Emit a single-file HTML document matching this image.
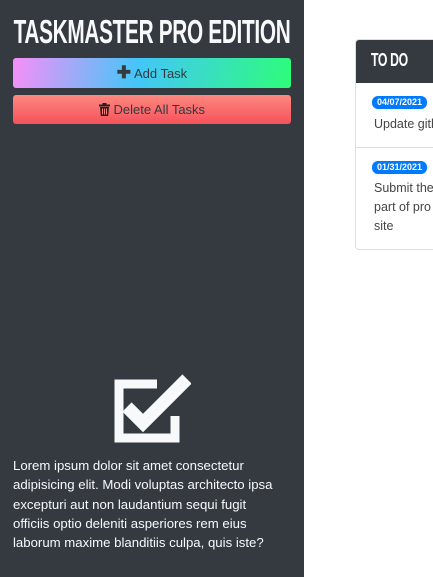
<!DOCTYPE html>
<html><head><style>
*{margin:0;padding:0;box-sizing:border-box}
body{width:433px;height:577px;overflow:hidden;background:#fff;font-family:"Liberation Sans",sans-serif;position:relative}
.side{position:absolute;left:0;top:0;width:304px;height:577px;background:#343a40}
h1{position:absolute;left:152px;top:14px;color:#f8f9fa;font-size:33px;font-weight:bold;letter-spacing:-0.5px;white-space:nowrap;transform:translateX(-50%) scaleX(0.63);line-height:36px}
.btn{position:absolute;left:13px;width:278px;border-radius:3px;text-align:center;color:#343a40;font-size:13px;line-height:29px}
.add{top:58px;height:30px;background:linear-gradient(100deg,#f78ff7 0%,#43c6f9 45%,#2dfd7a 100%)}
.del{top:95px;height:29px;background:linear-gradient(#fd8880,#f5525b)}
.lorem{position:absolute;left:13px;top:456px;width:272px;color:#f8f9fa;font-size:13.2px;line-height:19.3px}
.card{position:absolute;left:355px;top:39px;width:100px;height:211px;border:1px solid #ddd;border-radius:4px;overflow:hidden}
.ch{background:#343a40;height:43px;color:#fff;font-weight:bold;font-size:18px;padding:10px 0 0 15px;letter-spacing:-0.5px}
.ch span{display:inline-block;transform:scaleX(0.68);transform-origin:left}
.badge{position:absolute;left:16px;background:#007bff;color:#fff;font-size:9px;font-weight:bold;border-radius:6px;padding:1px 5px;line-height:11px}
.t{position:absolute;left:18px;font-size:12.5px;color:#444;line-height:19px;white-space:nowrap}
</style></head><body>
<div class="side">
<h1>TASKMASTER PRO EDITION</h1>
<div class="btn add"><b style="font-size:17px">✚</b> Add Task</div>
<div class="btn del"><svg width="11" height="13" viewBox="0 0 11 13" style="vertical-align:-2px"><rect x="0" y="1.5" width="11" height="2" fill="#222"/><rect x="3.5" y="0" width="4" height="2" fill="#222"/><path d="M1 4h9l-.8 9H1.8z" fill="#222"/><path d="M3.5 5.5v6M5.5 5.5v6M7.5 5.5v6" stroke="#f77" stroke-width="1"/></svg> Delete All Tasks</div>
<svg style="position:absolute;left:113px;top:374px" width="78" height="70" viewBox="0 0 78 70"><path d="M44 10H6v54h56V42" fill="none" stroke="#f8f9fa" stroke-width="9"/><path d="M14 33l16 16L74 5" fill="none" stroke="#f8f9fa" stroke-width="13"/></svg>
<div class="lorem">Lorem ipsum dolor sit amet consectetur adipisicing elit. Modi voluptas architecto ipsa excepturi aut non laudantium sequi fugit officiis optio deleniti asperiores rem eius laborum maxime blanditiis culpa, quis iste?</div>
</div>
<div class="card">
<div class="ch"><span>TO DO</span></div>
<div class="badge" style="top:56px">04/07/2021</div>
<div class="t" style="top:75px">Update github</div>
<div style="position:absolute;left:0;top:107px;width:100%;border-top:1px solid #ddd"></div>
<div class="badge" style="top:121px">01/31/2021</div>
<div class="t" style="top:139px">Submit the<br>part of pro<br>site</div>
</div>
</body></html>
